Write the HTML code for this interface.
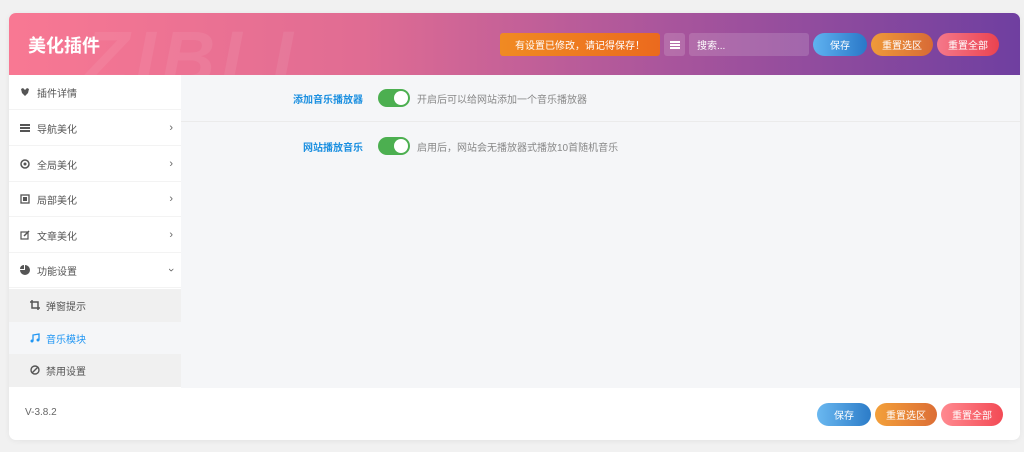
<!DOCTYPE html>
<html><head><meta charset="utf-8"><style>
*{box-sizing:border-box;margin:0;padding:0}
body{width:1024px;height:452px;background:#f1f1f1;font-family:"Liberation Sans","Noto Sans CJK SC",sans-serif;position:relative;overflow:hidden}
.card{position:absolute;left:9px;top:13px;width:1011px;height:427px;border-radius:7px;background:#f5f6f8;overflow:hidden;box-shadow:0 1px 6px rgba(0,0,0,.06)}
.hd{position:absolute;left:0;top:0;width:100%;height:62px;background:linear-gradient(90deg,#f87893 0%,#e06c93 35%,#a9559c 65%,#6f3fa0 100%);overflow:hidden}
.hd h1{position:absolute;left:19px;top:19px;color:#fff;font-size:18px;font-weight:bold}
.wm{position:absolute;left:75px;top:2px;font-size:74px;font-weight:bold;font-style:italic;color:rgba(255,255,255,.07);letter-spacing:6px}
.b{position:absolute;height:23px;color:#fff;font-size:10px;display:flex;align-items:center;justify-content:center;border-radius:12px}
.side{position:absolute;left:0;top:62px;width:172px;height:313px;background:#fff}
.it{position:absolute;left:0;width:172px;height:35px;border-bottom:1px solid #f3f3f3;font-size:10px;color:#555;display:flex;align-items:center;padding-left:28px}
.it svg{position:absolute;left:11px;top:12px}
.it .ar{position:absolute;right:8px;top:11px;font-size:11px;color:#666}
.sub{position:absolute;left:0;width:172px;height:33px;background:#f0f0f0;font-size:10px;color:#555;display:flex;align-items:center;padding-left:37px}
.sub svg{position:absolute;left:21px;top:11px}
.row{position:absolute;left:172px;width:839px;height:47px;font-size:10px}
.lab{position:absolute;right:657px;top:16px;color:#1a8fe0;font-weight:bold;white-space:nowrap}
.tg{position:absolute;left:197px;top:14px;width:32px;height:18px;border-radius:9px;background:#4caf50}
.tg:after{content:"";position:absolute;right:2px;top:2px;width:14px;height:14px;border-radius:50%;background:#fff}
.ds{position:absolute;left:236px;top:16px;color:#888}
.ft{position:absolute;left:0;top:375px;width:100%;height:52px;background:#fff}
</style></head><body>
<div class="card">
 <div class="hd"><div class="wm">ZIBLL</div><h1>美化插件</h1>
  <div class="b" style="left:491px;top:20px;width:160px;border-radius:3px;background:linear-gradient(90deg,#f08a22,#eb6a1e)">有设置已修改，请记得保存！</div>
  <div class="b" style="left:655px;top:20px;width:21px;border-radius:3px;background:rgba(255,255,255,.15)"><svg width="10" height="8"><rect x="0" y="0" width="10" height="2" fill="#fff"/><rect x="0" y="3" width="10" height="2" fill="#fff"/><rect x="0" y="6" width="10" height="2" fill="#fff"/></svg></div>
  <div class="b" style="left:680px;top:20px;width:120px;border-radius:3px;background:rgba(255,255,255,.15);justify-content:flex-start;padding-left:8px">搜索...</div>
  <div class="b" style="left:804px;top:20px;width:54px;background:linear-gradient(90deg,#5fb2f0,#2a78c8)">保存</div>
  <div class="b" style="left:862px;top:20px;width:62px;background:linear-gradient(90deg,#ef9a3a,#d86a35)">重置选区</div>
  <div class="b" style="left:928px;top:20px;width:62px;background:linear-gradient(90deg,#f5788a,#ea4350)">重置全部</div>
 </div>
 <div class="side">
  <div class="it" style="top:0"><svg width="10" height="10"><path d="M1 2L3 1L5 3L7 1L9 2L8 6L5 9L2 6Z" fill="#555"/></svg>插件详情</div>
  <div class="it" style="top:36px"><svg width="10" height="10"><rect y="1" width="10" height="2" fill="#555"/><rect y="4" width="10" height="2" fill="#555"/><rect y="7" width="10" height="2" fill="#555"/></svg>导航美化<span class="ar">›</span></div>
  <div class="it" style="top:72px"><svg width="10" height="10"><circle cx="5" cy="5" r="4" fill="none" stroke="#555" stroke-width="1.5"/><circle cx="5" cy="5" r="1.5" fill="#555"/></svg>全局美化<span class="ar">›</span></div>
  <div class="it" style="top:107px"><svg width="10" height="10"><rect x="1" y="1" width="8" height="8" fill="none" stroke="#555" stroke-width="1.3"/><rect x="3" y="3" width="4" height="4" fill="#555"/></svg>局部美化<span class="ar">›</span></div>
  <div class="it" style="top:143px"><svg width="10" height="10"><rect x="1" y="2" width="7" height="7" fill="none" stroke="#555" stroke-width="1.2"/><path d="M4 6L9 1" stroke="#555" stroke-width="1.5"/></svg>文章美化<span class="ar">›</span></div>
  <div class="it" style="top:178px"><svg width="10" height="10"><path d="M5 5L5 0A5 5 0 1 1 0 5Z" fill="#555"/><path d="M4 4L4 0A4 4 0 0 0 0 4Z" fill="#555"/></svg>功能设置<span class="ar" style="transform:rotate(90deg)">›</span></div>
  <div class="sub" style="top:214px"><svg width="10" height="10"><path d="M2 0V8H10M0 2H8V10" fill="none" stroke="#555" stroke-width="1.5"/></svg>弹窗提示</div>
  <div class="sub" style="top:247px;background:#f5f6f8;color:#2196f3"><svg width="10" height="10"><path d="M3 8V2L9 1V7" fill="none" stroke="#2196f3" stroke-width="1.3"/><circle cx="2" cy="8" r="1.5" fill="#2196f3"/><circle cx="8" cy="7" r="1.5" fill="#2196f3"/></svg>音乐模块</div>
  <div class="sub" style="top:279px"><svg width="10" height="10"><circle cx="5" cy="5" r="4" fill="none" stroke="#555" stroke-width="1.4"/><path d="M2 8L8 2" stroke="#555" stroke-width="1.4"/></svg>禁用设置</div>
 </div>
 <div class="row" style="top:62px;border-bottom:1px solid #ebebeb"><span class="lab">添加音乐播放器</span><span class="tg"></span><span class="ds">开启后可以给网站添加一个音乐播放器</span></div>
 <div class="row" style="top:110px"><span class="lab">网站播放音乐</span><span class="tg"></span><span class="ds">启用后，网站会无播放器式播放10首随机音乐</span></div>
 <div class="ft">
  <div style="position:absolute;left:16px;top:19px;font-size:10px;color:#666">V-3.8.2</div>
  <div class="b" style="left:808px;top:15px;width:54px;background:linear-gradient(90deg,#6ab8f0,#2c7cc8)">保存</div>
  <div class="b" style="left:866px;top:15px;width:62px;background:linear-gradient(90deg,#f3a03a,#dc6e35)">重置选区</div>
  <div class="b" style="left:932px;top:15px;width:62px;background:linear-gradient(90deg,#ff8a90,#f34a55)">重置全部</div>
 </div>
</div>
</body></html>
